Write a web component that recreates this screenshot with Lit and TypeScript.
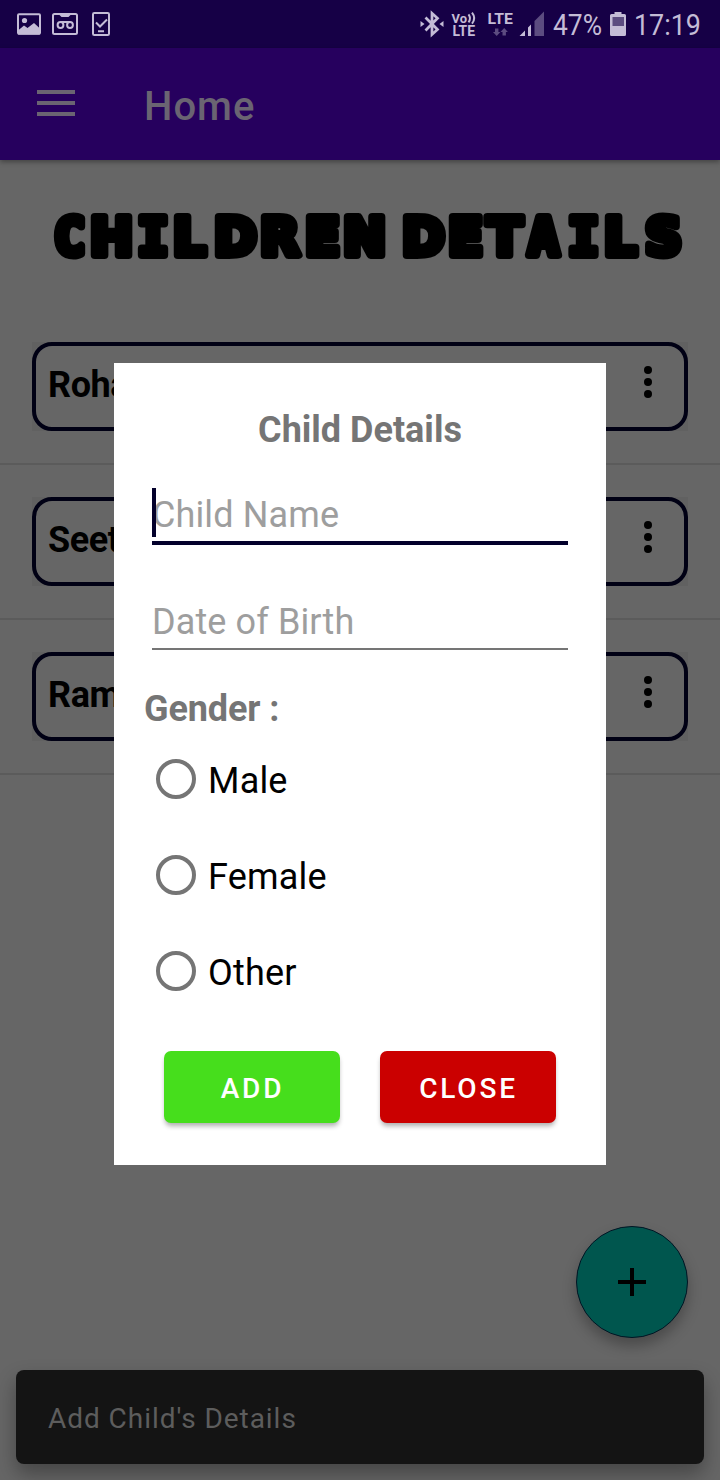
import { LitElement, html, css, svg } from "lit";
import { customElement, property } from "lit/decorators.js";

@customElement("status-bar")
class StatusBar extends LitElement {
  static styles = css`
    :host { display: block; height: 48px; background: #160046; }
    svg { display: block; }
    text { font-family: Roboto, sans-serif; fill: #c4bcd6; }
    .fill { fill: #c4bcd6; }
    .line { fill: none; stroke: #c4bcd6; stroke-width: 2; }
    .dim { fill: #5c4c80; }
  `;
  render() {
    return html`<svg width="720" height="48" viewBox="0 0 720 48">
      ${svg`
      <rect class="line" x="18" y="14.3" width="22" height="19.4" rx="1"/>
      <circle class="fill" cx="24.5" cy="20.5" r="2.6"/>
      <path class="fill" d="M18 30.5l6-5 3.5 2.5 6.5-5 6 5.5v6H18z"/>
      <rect class="line" x="53" y="14" width="24" height="20" rx="1.5"/>
      <path class="fill" d="M59.5 13h11v2l-2 2h-7l-2-2z"/>
      <circle class="line" cx="60.5" cy="25" r="2.9"/>
      <circle class="line" cx="70" cy="25" r="2.9"/>
      <path class="line" d="M60.5 22h9.5"/>
      <rect class="line" x="93" y="13" width="16" height="22" rx="1.3"/>
      <path class="line" d="M96 22.5l4 4 7-7M98 31.2h6"/>
      <path class="line" style="stroke-width:2.7" d="M425.500 17.500l12 12-5.500 5V13.300l5.500 5-12 12.200"/>
      <path class="fill" d="M420.500 21l4 3-4 3zM443.500 21l-4 3 4 3z"/>
      <text x="451.500" y="22.500" font-size="13.500" font-weight="700" textLength="15.500" lengthAdjust="spacingAndGlyphs">Vo</text>
      <path class="line" d="M468.500 14.300q3 4 0 8M472 12.700q4.400 5.500 0 11"/>
      <text x="452.500" y="36" font-size="14.500" font-weight="700" textLength="22.500" lengthAdjust="spacingAndGlyphs">LTE</text>
      <text x="487.500" y="24" font-size="15.500" font-weight="700" textLength="25.500" lengthAdjust="spacingAndGlyphs">LTE</text>
      <path class="dim" d="M495 28.500h3.400v3.500h2l-3.700 4-3.700-4h2zM502.500 35.500v-3.500h-2l3.700-4 3.700 4h-2v3.500z"/>
      <path class="fill" d="M519.500 36l5.500-5.500V36zM528 27.500l3-3V36h-3z"/>
      <path class="dim" d="M534.500 21l9.500-9.500V36h-9.500z"/>
      <text x="553" y="35" font-size="30" textLength="49" lengthAdjust="spacingAndGlyphs">47%</text>
      <path class="fill" d="M614.500 12h7v2h3q1.500 0 1.500 1.500v19q0 1.500-1.500 1.500h-13q-1.500 0-1.500-1.500v-19q0-1.500 1.500-1.500h3z"/>
      <rect class="dim" x="612.500" y="17" width="11.500" height="9"/>
      <text x="634" y="35" font-size="30" textLength="67" lengthAdjust="spacingAndGlyphs">17:19</text>
      `}
    </svg>`;
  }
}

@customElement("child-row")
class ChildRow extends LitElement {
  @property() name = "";
  static styles = css`
    :host { display: block; padding: 32px 32px; border-bottom: 2px solid #5b5b5b; }
    .plate { background: #616161; }
    .card {
      display: flex; justify-content: space-between; box-sizing: border-box; height: 89px;
      border: 4px solid #000014; border-radius: 20px; background: #666;
      padding: 18px 32px 0 12px;
    }
    .name { font: 700 36px/42px Roboto, sans-serif; color: #000; letter-spacing: -0.4px; }
    .dots { display: flex; flex-direction: column; gap: 4px; padding-top: 2px; }
    .dots i { width: 8px; height: 8px; border-radius: 50%; background: #000; }
  `;
  render() {
    return html`<div class="plate"><div class="card">
      <span class="name">${this.name}</span>
      <span class="dots"><i></i><i></i><i></i></span>
    </div></div>`;
  }
}

@customElement("child-dialog")
class ChildDialog extends LitElement {
  static styles = css`
    :host {
      display: block; box-sizing: border-box; width: 492px; height: 802px; background: #fff;
      padding-top: 46px; font: 400 36px/42px Roboto, sans-serif; color: #000;
    }
    .title { text-align: center; font-weight: 700; color: #757575; }
    .field { position: relative; margin: 0 38px; height: 53px; line-height: 55px; letter-spacing: 0.12px; color: #9e9e9e; }
    .name { margin-top: 37px; border-bottom: 4px solid #03002b; }
    .birth { margin-top: 50px; border-bottom: 2px solid #757575; }
    .caret { position: absolute; left: 0; top: 0; width: 4px; height: 49px; background: #03002b; }
    .gender { margin: 38px 0 1px 30px; font-weight: 700; letter-spacing: -0.12px; color: #757575; }
    .option { display: flex; align-items: center; gap: 12px; height: 96px; padding-left: 42px; }
    .ring { box-sizing: border-box; width: 40px; height: 40px; border: 4px solid #757575; border-radius: 50%; }
    .label { padding-top: 3px; letter-spacing: 0.2px; }
    .actions { display: flex; gap: 40px; padding: 32px 50px 0; }
    .btn {
      flex: 1; height: 72px; border-radius: 7px; text-align: center; color: #fff;
      font-size: 28px; font-weight: 500; line-height: 76px; letter-spacing: 2.8px; text-indent: 1px;
      box-shadow: 0 4px 5px -1px rgba(0, 0, 0, 0.32);
    }
    .add { background: #46de1c; }
    .close { background: #cb0000; }
  `;
  render() {
    return html`
      <div class="title">Child Details</div>
      <div class="field name">Child Name<i class="caret"></i></div>
      <div class="field birth">Date of Birth</div>
      <div class="gender">Gender :</div>
      ${["Male", "Female", "Other"].map(
        (g) => html`<div class="option"><span class="ring"></span><span class="label">${g}</span></div>`
      )}
      <div class="actions"><div class="btn add">ADD</div><div class="btn close">CLOSE</div></div>
    `;
  }
}

@customElement("app-root")
class AppRoot extends LitElement {
  static styles = css`
    :host {
      display: flex; flex-direction: column; position: relative; height: 1480px; width: 720px;
      background: #666; overflow: hidden; font-family: Roboto, sans-serif;
    }
    .appbar {
      display: flex; align-items: center; height: 112px; box-sizing: border-box; padding-left: 37px; gap: 69px;
      background: #26005e; box-shadow: 0 2px 5px rgba(0, 0, 0, 0.35); color: #6a6472;
    }
    .menu { display: flex; flex-direction: column; gap: 7px; width: 38px; padding-bottom: 2px; }
    .menu i { height: 4px; background: #6a6472; }
    .home { font-size: 40px; line-height: 48px; font-weight: 500; letter-spacing: 1px; padding-top: 6px; }
    .heading { height: 150px; }
    .heading svg { display: block; }
    .heading text {
      font: 700 51.5px "DejaVu Sans", sans-serif; fill: #000; stroke: #000; stroke-width: 8px; stroke-linejoin: round;
    }
    .heading .slab { font-family: "DejaVu Sans Mono", monospace; }
    .dialog { position: absolute; left: 114px; top: 363px; }
    .fab {
      position: absolute; left: 576px; top: 1226px; width: 112px; height: 112px; box-sizing: border-box;
      border: 1px solid #001524; border-radius: 50%; background: #00564e;
      box-shadow: 0 8px 14px rgba(0, 0, 0, 0.28);
    }
    .fab svg { display: block; }
    .snack {
      margin: auto 16px 16px; height: 94px; box-sizing: border-box; padding: 0 32px; border-radius: 8px;
      background: #141414; color: #5d5d5d; font-size: 28px; line-height: 97px; letter-spacing: 0.95px;
      box-shadow: 0 10px 20px rgba(0, 0, 0, 0.32);
    }
  `;
  render() {
    return html`
      <status-bar></status-bar>
      <div class="appbar">
        <div class="menu"><i></i><i></i><i></i></div>
        <div class="home">Home</div>
      </div>
      <div class="heading">
        <svg width="720" height="150" viewBox="0 0 720 150">
          ${svg`<text y="95.300"><tspan class="slab" x="54">C</tspan><tspan x="90">H</tspan><tspan class="slab" x="137.500">I</tspan><tspan x="173 214 260 305 343 386 402 448 487">LDREN DET</tspan><tspan class="slab" x="528 568">AI</tspan><tspan x="604 645">LS</tspan></text>`}
        </svg>
      </div>
      ${["Rohan", "Seeta", "Raman"].map((n) => html`<child-row .name=${n}></child-row>`)}
      <div class="snack">Add Child's Details</div>
      <div class="fab">
        <svg width="110" height="110" viewBox="0 0 110 110"><path d="M41 55h28M55 41v28" stroke="#000" stroke-width="4" /></svg>
      </div>
      <child-dialog class="dialog"></child-dialog>
    `;
  }
}
